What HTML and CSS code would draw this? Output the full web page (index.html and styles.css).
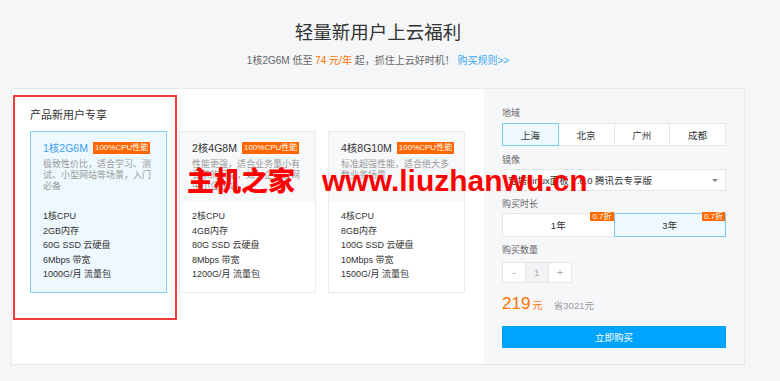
FILE: index.html
```html
<!DOCTYPE html>
<html lang="zh-CN">
<head>
    <meta charset="UTF-8">
    <meta name="viewport" content="width=device-width, initial-scale=1.0">
    <title>轻量新用户上云福利</title>
    <link rel="stylesheet" href="styles.css">
</head>
<body>
    <div class="page">
        <h1 class="title">轻量新用户上云福利</h1>
        <p class="subtitle">1核2G6M 低至 <span class="hl">74 元/年</span> 起，抓住上云好时机！ <a class="rule" href="#">购买规则&gt;&gt;</a></p>

        <div class="main">
            <div class="products">
                <h3 class="products-title">产品新用户专享</h3>
                <div class="cards">
                    <div class="card active">
                        <div class="card-top">
                            <div class="card-head">
                                <span class="card-name">1核2G6M</span>
                                <span class="badge">100%CPU性能</span>
                            </div>
                            <p class="card-desc">极致性价比，适合学习、测试、小型网站等场景，入门必备</p>
                        </div>
                        <ul class="specs">
                            <li>1核CPU</li>
                            <li>2GB内存</li>
                            <li>60G SSD 云硬盘</li>
                            <li>6Mbps 带宽</li>
                            <li>1000G/月 流量包</li>
                        </ul>
                    </div>
                    <div class="card">
                        <div class="card-top">
                            <div class="card-head">
                                <span class="card-name">2核4G8M</span>
                                <span class="badge">100%CPU性能</span>
                            </div>
                            <p class="card-desc">性能更强，适合业务量小有要求的网站，如：企业官网中小企业站</p>
                        </div>
                        <ul class="specs">
                            <li>2核CPU</li>
                            <li>4GB内存</li>
                            <li>80G SSD 云硬盘</li>
                            <li>8Mbps 带宽</li>
                            <li>1200G/月 流量包</li>
                        </ul>
                    </div>
                    <div class="card">
                        <div class="card-top">
                            <div class="card-head">
                                <span class="card-name">4核8G10M</span>
                                <span class="badge">100%CPU性能</span>
                            </div>
                            <p class="card-desc">标准超强性能，适合绝大多数业务场景</p>
                        </div>
                        <ul class="specs">
                            <li>4核CPU</li>
                            <li>8GB内存</li>
                            <li>100G SSD 云硬盘</li>
                            <li>10Mbps 带宽</li>
                            <li>1500G/月 流量包</li>
                        </ul>
                    </div>
                </div>
            </div>

            <div class="buy">
                <div class="label">地域</div>
                <div class="options regions">
                    <button class="opt selected">上海</button>
                    <button class="opt">北京</button>
                    <button class="opt">广州</button>
                    <button class="opt">成都</button>
                </div>

                <div class="label">镜像</div>
                <div class="select">
                    <span>宝塔Linux面板 7.6.0 腾讯云专享版</span>
                    <i class="caret"></i>
                </div>

                <div class="label">购买时长</div>
                <div class="options durations">
                    <button class="opt">1年<em class="discount">0.7折</em></button>
                    <button class="opt selected">3年<em class="discount">0.7折</em></button>
                </div>

                <div class="label">购买数量</div>
                <div class="stepper">
                    <span class="step">-</span>
                    <span class="step count">1</span>
                    <span class="step">+</span>
                </div>

                <div class="price">
                    <span class="amount">219</span><span class="unit">元</span>
                    <span class="save">省3021元</span>
                </div>

                <button class="buy-btn">立即购买</button>
            </div>

            <div class="mark-box"></div>
            <div class="watermark">
                <span class="wm-cn">主机之家</span>
                <span class="wm-en">www.liuzhanwu.cn</span>
            </div>
        </div>
    </div>
</body>
</html>
```

FILE: styles.css
```css
body {
    margin: 0;
    background: #f5f6f8;
    font-family: "Liberation Sans", "Noto Sans CJK SC", sans-serif;
    color: #333;
}

.page {
    width: 734px;
    margin-left: 11px;
    padding-top: 21px;
}

.title {
    margin: 0;
    font-size: 18.5px;
    line-height: 24px;
    font-weight: normal;
    text-align: center;
    color: #333;
}

.subtitle {
    margin: 9px 0 0;
    font-size: 10px;
    line-height: 14px;
    text-align: center;
    color: #666;
}

.subtitle .hl {
    color: #ff7200;
}

.subtitle .rule {
    color: #3ea6f2;
    text-decoration: none;
}

.main {
    position: relative;
    display: flex;
    width: 734px;
    height: 277px;
    margin-top: 20px;
    box-sizing: border-box;
    border: 1px solid #e8e9eb;
}

.products {
    width: 472px;
    padding: 19px 0 0 18px;
    box-sizing: border-box;
    background: #fff;
}

.products-title {
    margin: 0;
    font-size: 11px;
    line-height: 14px;
    font-weight: normal;
    color: #333;
}

.cards {
    display: flex;
    gap: 12px;
    margin-top: 9px;
}

.card {
    width: 137px;
    height: 162px;
    box-sizing: border-box;
    border: 1px solid #eaebee;
    background: #fff;
}

.card-top {
    height: 70px;
    box-sizing: border-box;
    padding: 9px 6px 0 12px;
    background: #f7f8fa;
}

.card.active {
    border-color: #86cdf9;
    background: #eef8ff;
}

.card.active .card-top {
    background: transparent;
}

.card-head {
    display: flex;
    align-items: center;
    height: 14px;
    white-space: nowrap;
}

.card-name {
    flex-shrink: 0;
    font-size: 10.5px;
    line-height: 14px;
    color: #333;
}

.card.active .card-name {
    color: #3aa1f2;
}

.badge {
    flex-shrink: 0;
    margin-left: 5px;
    padding: 0 2px;
    height: 12px;
    line-height: 12px;
    font-size: 8px;
    color: #fff;
    background: #ff6600;
}

.card-desc {
    margin: 4px 2px 0 0;
    font-size: 9px;
    line-height: 11px;
    color: #999;
}

.specs {
    list-style: none;
    margin: 0;
    padding: 7px 0 0 12px;
    font-size: 9px;
    line-height: 14.5px;
    color: #333;
}

.buy {
    flex: 1;
    padding: 18px 18px 0 18px;
    background: #f6f7f9;
}

.label {
    margin-top: 7px;
    font-size: 9px;
    line-height: 12px;
    color: #666;
}

.label:first-child {
    margin-top: 0;
}

.options {
    display: flex;
    margin-top: 4px;
}

.opt {
    position: relative;
    flex: 1;
    height: 23px;
    margin-left: -1px;
    padding: 0;
    border: 1px solid #e5e6e8;
    background: #fff;
    font-family: inherit;
    font-size: 9.5px;
    color: #333;
}

.opt:first-child {
    margin-left: 0;
}

.opt.selected {
    z-index: 1;
    border-color: #7fc9f8;
    background: #eef8ff;
}

.durations {
    margin-top: 3px;
}

.durations .opt {
    height: 24px;
}

.discount {
    position: absolute;
    top: -2px;
    right: 0;
    padding: 0 2px;
    font-style: normal;
    font-size: 8px;
    line-height: 9px;
    color: #fff;
    background: #ff6a00;
}

.select {
    display: flex;
    align-items: center;
    justify-content: space-between;
    height: 22px;
    margin-top: 3px;
    padding: 0 7px 0 5px;
    box-sizing: border-box;
    border: 1px solid #e5e6e8;
    background: #fff;
    font-size: 9.5px;
    color: #333;
}

.caret {
    width: 0;
    height: 0;
    border-left: 3px solid transparent;
    border-right: 3px solid transparent;
    border-top: 3px solid #888;
}

.buy .label:nth-of-type(3) {
    margin-top: 8px;
}

.buy .label:nth-of-type(4) {
    margin-top: 5px;
}

.stepper {
    display: flex;
    margin-top: 6px;
}

.step {
    width: 24px;
    height: 21px;
    margin-left: -1px;
    box-sizing: border-box;
    border: 1px solid #e5e6e8;
    background: #fff;
    text-align: center;
    font-size: 11px;
    line-height: 19px;
    color: #aaa;
}

.step:first-child {
    margin-left: 0;
}

.step.count {
    background: #f2f3f5;
    font-size: 9.5px;
}

.price {
    height: 20px;
    margin-top: 11px;
    line-height: 20px;
    color: #ff7200;
}

.amount {
    font-size: 17px;
}

.unit {
    margin-left: 2px;
    font-size: 10px;
}

.save {
    margin-left: 7px;
    font-size: 9.5px;
    color: #999;
}

.buy-btn {
    display: block;
    width: 100%;
    height: 22px;
    margin-top: 12px;
    border: none;
    background: #00a4ff;
    font-family: inherit;
    font-size: 9.5px;
    color: #fff;
}

.mark-box {
    position: absolute;
    left: 1px;
    top: 6px;
    width: 164px;
    height: 225px;
    box-sizing: border-box;
    border: 2px solid #f03b3b;
}

.watermark {
    position: absolute;
    left: 175px;
    top: 76px;
    display: flex;
    align-items: baseline;
    color: #ff0000;
    font-weight: bold;
    white-space: nowrap;
}

.wm-cn {
    font-family: "Noto Sans CJK SC", sans-serif;
    font-size: 27px;
    line-height: 30px;
    font-weight: 900;
}

.wm-en {
    margin-left: 27px;
    font-family: "Liberation Sans", sans-serif;
    font-size: 30px;
    line-height: 30px;
}
```
